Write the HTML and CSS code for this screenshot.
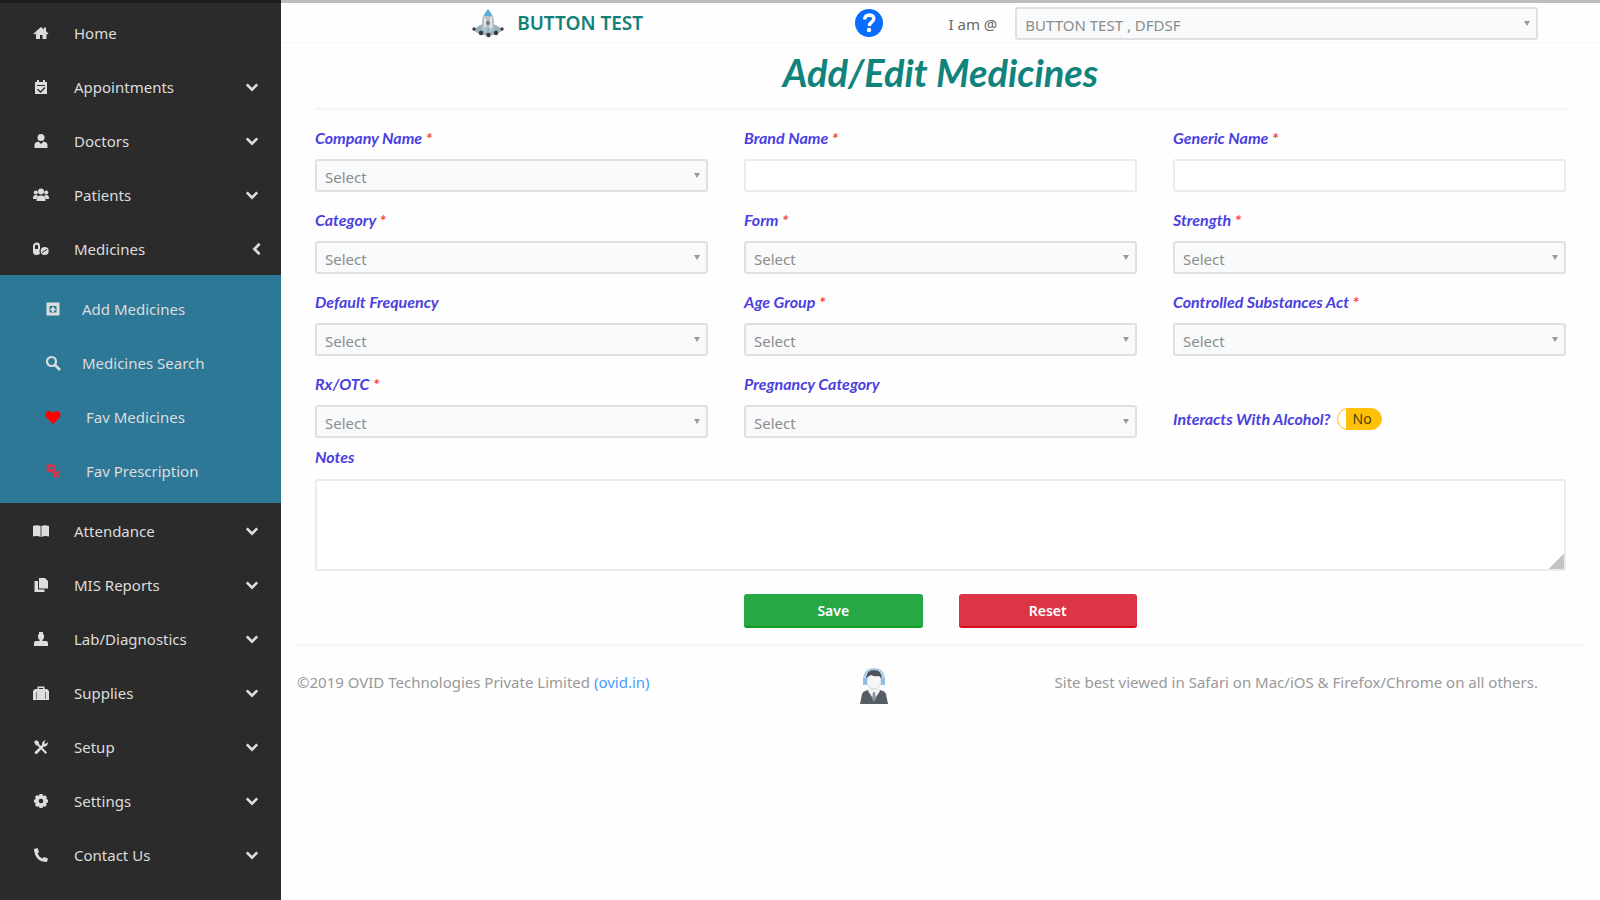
FILE: index.html
```html
<!DOCTYPE html>
<html lang="en">
<head>
  <meta charset="UTF-8">
  <meta name="viewport" content="width=device-width, initial-scale=1.0">
  <title>Add/Edit Medicines</title>
  <link rel="stylesheet" href="styles.css">
</head>
<body>
  <div class="page">
    <nav class="sidebar">
      <a class="nav-item" href="#">
        <svg class="icon" viewBox="0 0 16 16"><path d="M8 2L0.500 8.500l1 1L3 8.500V14h4v-4h2.500v4H13.500V8.500l1 1 1-1L13 6.300V2.500h-2v2z"/></svg>
        <span>Home</span>
      </a>
      <a class="nav-item" href="#">
        <svg class="icon" viewBox="0 0 16 16"><path fill-rule="evenodd" d="M2 3h2V1h2v2h4V1h2v2h2v12H2zM4 6v1h8V6zM11.500 8L7.500 12 5 9.700l-1 1L7.500 14l5-5z"/></svg>
        <span>Appointments</span>
        <svg class="chevron" viewBox="0 0 16 16"><path d="M2 5l6 6 6-6"/></svg>
      </a>
      <a class="nav-item" href="#">
        <svg class="icon" viewBox="0 0 16 16"><circle cx="8" cy="4.500" r="3.500"/><path d="M1.500 15v-3q0-3 4-3.500L8 11l2.500-2.500q4 .5 4 3.500v3z"/></svg>
        <span>Doctors</span>
        <svg class="chevron" viewBox="0 0 16 16"><path d="M2 5l6 6 6-6"/></svg>
      </a>
      <a class="nav-item" href="#">
        <svg class="icon" viewBox="0 0 16 16"><circle cx="8" cy="4.500" r="3"/><circle cx="2.800" cy="5.500" r="2"/><circle cx="13.200" cy="5.500" r="2"/><path d="M0 11q0-3 3-3l2 .5Q3.500 10 3 12H0zM16 11q0-3-3-3l-2 .5q1.500 1.500 2 3.500h3zM3.500 14v-2q0-3.500 4.500-3.500t4.500 3.500v2z"/></svg>
        <span>Patients</span>
        <svg class="chevron" viewBox="0 0 16 16"><path d="M2 5l6 6 6-6"/></svg>
      </a>
      <a class="nav-item nav-item-open" href="#">
        <svg class="icon" viewBox="0 0 16 16"><path fill-rule="evenodd" d="M0 5q0-3 3.500-3.500T7 5v2.500Q6 9 7 12.500 6 14 3.500 14 0 14 0 11zM2 5v3h3V5q0-1.300-1.500-1.300T2 5z"/><circle cx="11.700" cy="10" r="4"/><path d="M9 11.500l5-3" stroke="#2b2b2b"/></svg>
        <span>Medicines</span>
        <svg class="chevron" viewBox="0 0 16 16"><path d="M11 2L5 8l6 6"/></svg>
      </a>
      <div class="submenu">
        <a class="nav-item" href="#">
          <svg class="icon" viewBox="0 0 16 16"><path fill-rule="evenodd" d="M1.500 1.500h13v13h-13zM4.500 5v6.500h7V5zM7 6h2v1.500h1.500v2H9V11H7V9.500H5.500v-2H7z"/></svg>
          <span>Add Medicines</span>
        </a>
        <a class="nav-item" href="#">
          <svg class="icon" viewBox="0 0 16 16"><path d="M9.500 9.500L15 15" stroke="#ddd" stroke-width="2.600"/><circle cx="6.500" cy="6.500" r="4.500" fill="none" stroke="#ddd" stroke-width="2.200"/></svg>
          <span>Medicines Search</span>
        </a>
        <a class="nav-item nav-item-fav" href="#">
          <svg class="icon icon-heart" viewBox="0 0 16 16"><path d="M8 15L1.500 8.500Q-.5 5.500 1.500 3.200 5 .5 8 4q3-3.500 6.500-.8 2 2.300 0 5.300z"/></svg>
          <span>Fav Medicines</span>
        </a>
        <a class="nav-item nav-item-fav" href="#">
          <svg class="icon icon-rx" viewBox="0 0 16 16"><path d="M3 9V2.500h3.500q3 0 3 2.500T7 7.500H3M6.500 7.500L14 14M14 8l-5 6" fill="none" stroke="#dc3545" stroke-width="2.600"/></svg>
          <span>Fav Prescription</span>
        </a>
      </div>
      <a class="nav-item" href="#">
        <svg class="icon" viewBox="0 0 16 16"><path d="M0 3q4-1.500 7.600 0v11Q4 12.500 0 13.500zM16 3q-4-1.500-7.600 0v11q3.600-1.500 7.600-.5z"/></svg>
        <span>Attendance</span>
        <svg class="chevron" viewBox="0 0 16 16"><path d="M2 5l6 6 6-6"/></svg>
      </a>
      <a class="nav-item" href="#">
        <svg class="icon" viewBox="0 0 16 16"><path d="M6 1h6l3 3v7.500H6zM1.500 4H5v8.500h6.500V15h-10z"/></svg>
        <span>MIS Reports</span>
        <svg class="chevron" viewBox="0 0 16 16"><path d="M2 5l6 6 6-6"/></svg>
      </a>
      <a class="nav-item" href="#">
        <svg class="icon" viewBox="0 0 16 16"><path d="M6 1h4v2l1 1v3l-1.500 2v1H14l1 2v3H1v-3l1-2h4.500V9L5 7V4l1-1z"/></svg>
        <span>Lab/Diagnostics</span>
        <svg class="chevron" viewBox="0 0 16 16"><path d="M2 5l6 6 6-6"/></svg>
      </a>
      <a class="nav-item" href="#">
        <svg class="icon" viewBox="0 0 16 16"><path fill-rule="evenodd" d="M4.500 4V1.500h7V4H14l2 2v9H0V6l2-2zM6 3v1h4V3z"/><path d="M3.500 7v7M12.500 7v7" stroke="#777"/></svg>
        <span>Supplies</span>
        <svg class="chevron" viewBox="0 0 16 16"><path d="M2 5l6 6 6-6"/></svg>
      </a>
      <a class="nav-item" href="#">
        <svg class="icon" viewBox="0 0 16 16"><path d="M1 3l2-2 3 2v2l8 8.500L12.500 15 4.500 6.500H3z"/><path d="M9 6q-.5-4 4-5L11 3.500 12.500 5 15 3q0 4.500-4.500 4.800L4 15q-2 .5-2.500-1.800z"/></svg>
        <span>Setup</span>
        <svg class="chevron" viewBox="0 0 16 16"><path d="M2 5l6 6 6-6"/></svg>
      </a>
      <a class="nav-item" href="#">
        <svg class="icon" viewBox="0 0 16 16"><path fill-rule="evenodd" d="M6.500 1h3l.5 2 2-.8 2 2L13.300 6l1.700.7v2.800l-2 .5.800 2-2 2-1.800-.8-.5 1.800h-3L6 13.200l-2 .8-2-2 .8-2-1.800-.5V6.700L2.800 6 2 4l2-2 2 1zM8 5.700a2.300 2.300 0 100 4.600 2.300 2.300 0 000-4.600z"/></svg>
        <span>Settings</span>
        <svg class="chevron" viewBox="0 0 16 16"><path d="M2 5l6 6 6-6"/></svg>
      </a>
      <a class="nav-item" href="#">
        <svg class="icon" viewBox="0 0 16 16"><path d="M1 2l3.500-1L6 5 4.500 6.500q1.500 3.500 5 5L11 10l4 1.500L14 15Q2 15 1 2z"/></svg>
        <span>Contact Us</span>
        <svg class="chevron" viewBox="0 0 16 16"><path d="M2 5l6 6 6-6"/></svg>
      </a>
    </nav>

    <div class="content">
      <header class="topbar">
        <div class="brand">
          <svg class="brand-logo" viewBox="0 0 34 32">
            <path d="M2 23q6-5 10-6h10q4 1 10 6l-6 4-9 2-9-2z" fill="#a3aeb5"/>
            <path d="M11 24V13q1-6 6-10 5 4 6 10v11q-6 3-12 0z" fill="#b7c1c8"/>
            <path d="M13 9q1-4 4-7 3 3 4 7z" fill="#58aedb"/>
            <path d="M14 11v9M20 10v11" stroke="#dfe5e9" stroke-width="2"/>
            <circle cx="17" cy="16" r="2" fill="#777"/>
            <path d="M7 22l6 3M27 22l-6 3M17 21v6" stroke="#84b4cf" stroke-width="2"/>
            <g fill="#3a3a3a"><circle cx="3" cy="22" r="1.700"/><circle cx="10" cy="26" r="2.200"/><circle cx="17.500" cy="28" r="2.200"/><circle cx="25" cy="26" r="2.200"/><circle cx="31" cy="22" r="1.700"/></g>
          </svg>
          <span>BUTTON TEST</span>
        </div>
        <a class="help" href="#" aria-label="Help">
          <svg viewBox="0 0 28 28"><circle cx="14" cy="14" r="14" fill="#0a6cff"/><path d="M9.500 10.500q.5-4.500 5-4.500 4.300.2 4.300 3.800 0 2-2.300 3.500-2 1.200-2.200 3.700" fill="none" stroke="#fff" stroke-width="3.400"/><circle cx="14" cy="21" r="2.200" fill="#fff"/></svg>
        </a>
        <div class="location">
          <label for="location">I am @</label>
          <select id="location" class="select"><option>BUTTON TEST , DFDSF</option></select>
        </div>
      </header>

      <main class="main">
        <h1>Add/Edit Medicines</h1>
        <form class="form">
          <div class="field">
            <label for="company">Company Name <span class="req">*</span></label>
            <select id="company" class="select"><option>Select</option></select>
          </div>
          <div class="field">
            <label for="brand">Brand Name <span class="req">*</span></label>
            <input id="brand" class="input" type="text">
          </div>
          <div class="field">
            <label for="generic">Generic Name <span class="req">*</span></label>
            <input id="generic" class="input" type="text">
          </div>
          <div class="field">
            <label for="category">Category <span class="req">*</span></label>
            <select id="category" class="select"><option>Select</option></select>
          </div>
          <div class="field">
            <label for="form">Form <span class="req">*</span></label>
            <select id="form" class="select"><option>Select</option></select>
          </div>
          <div class="field">
            <label for="strength">Strength <span class="req">*</span></label>
            <select id="strength" class="select"><option>Select</option></select>
          </div>
          <div class="field">
            <label for="frequency">Default Frequency</label>
            <select id="frequency" class="select"><option>Select</option></select>
          </div>
          <div class="field">
            <label for="age">Age Group <span class="req">*</span></label>
            <select id="age" class="select"><option>Select</option></select>
          </div>
          <div class="field">
            <label for="controlled">Controlled Substances Act <span class="req">*</span></label>
            <select id="controlled" class="select"><option>Select</option></select>
          </div>
          <div class="field">
            <label for="rx">Rx/OTC <span class="req">*</span></label>
            <select id="rx" class="select"><option>Select</option></select>
          </div>
          <div class="field">
            <label for="pregnancy">Pregnancy Category</label>
            <select id="pregnancy" class="select"><option>Select</option></select>
          </div>
          <div class="field-inline">
            <label for="alcohol">Interacts With Alcohol?</label>
            <span class="switch">
              <input id="alcohol" type="checkbox">
              <span class="switch-text">No</span>
            </span>
          </div>
          <div class="field field-notes">
            <label for="notes">Notes</label>
            <textarea id="notes" class="input notes"></textarea>
          </div>
          <div class="actions">
            <button type="button" class="btn btn-save">Save</button>
            <button type="reset" class="btn btn-reset">Reset</button>
          </div>
        </form>
      </main>

      <footer class="footer">
        <div>©2019 OVID Technologies Private Limited <a href="#">(ovid.in)</a></div>
        <svg class="agent" viewBox="0 0 28 36">
          <path d="M0 36l2-10q1-3 6-4h12q5 1 6 4l2 10z" fill="#555c63"/>
          <path d="M10 20h8l2 3-6 9-6-9z" fill="#f2f2f2"/>
          <path d="M13 24h2l1 7-2 3-2-3z" fill="#8b949b"/>
          <path d="M4 13Q4 1 14 1t10 12" fill="none" stroke="#a9cdea" stroke-width="2"/>
          <path d="M7 8q1-6 7-6t7 6v7q-2 6-7 6t-7-6z" fill="#f5f5f5" stroke="#cfd6db"/>
          <path d="M6 11Q6 2 14 2t8 9l-3-3q-5 1-8-1-3 1-5 4z" fill="#4b545c"/>
          <path d="M3 10h4v7H3zM21 10h4v7h-4z" fill="#8fbfe8"/>
        </svg>
        <div class="footer-note">Site best viewed in Safari on Mac/iOS &amp; Firefox/Chrome on all others.</div>
      </footer>
    </div>
  </div>
</body>
</html>
```
FILE: styles.css
```css
* {
  box-sizing: border-box;
}

body {
  margin: 0;
  font-family: "Noto Sans", sans-serif;
  font-size: 14px;
  color: #666;
  background-color: #fefefe;
}

.page {
  display: flex;
  min-height: 100vh;
  border-top: 3px solid #bdbdbd;
}

/* sidebar */
.sidebar {
  width: 281px;
  flex-shrink: 0;
  margin-top: -3px;
  padding-top: 2px;
  background-color: #2b2b2b;
  border-top: 3px solid #1c1c1c;
}

.nav-item {
  display: flex;
  align-items: center;
  height: 54px;
  padding: 2px 22px 0 33px;
  color: #ddd;
  font-size: 15px;
  text-decoration: none;
}

.nav-item .icon {
  margin-right: 25px;
}

.icon {
  width: 16px;
  height: 16px;
  fill: #ddd;
}

.chevron {
  width: 14px;
  height: 14px;
  margin-left: auto;
  fill: none;
  stroke: #ddd;
  stroke-width: 3;
}

.nav-item-open {
  padding-right: 17px;
}

.submenu {
  padding: 6px 0;
  background-color: #2d7797;
}

.submenu .nav-item {
  padding-left: 45px;
}

.submenu .icon {
  margin-right: 21px;
}

.submenu .nav-item-fav .icon {
  margin-right: 25px;
}

.submenu .icon-heart {
  fill: #f00;
}

/* header */
.content {
  flex: 1;
  min-width: 0;
}

.topbar {
  display: grid;
  grid-template-columns: 5fr 1fr 6fr;
  align-items: center;
  height: 40px;
  padding: 0 16px;
  border-bottom: 1px solid #f7f7f7;
}

.brand {
  display: flex;
  align-items: center;
  justify-content: center;
  gap: 12px;
  padding-right: 16px;
  color: #128078;
  font-size: 19px;
  font-weight: 600;
}

.brand-logo {
  width: 34px;
  height: 32px;
}

.help {
  padding-left: 22px;
}

.help svg {
  display: block;
  width: 28px;
  height: 28px;
}

.location {
  display: flex;
  align-items: center;
  gap: 18px;
  padding: 2px 46px 0 8px;
  font-size: 15px;
}

.location .select {
  flex: 1;
}

/* form */
.main {
  padding: 0 34px;
}

h1 {
  margin: 0 0 16px;
  padding: 5px 0 12px;
  border-bottom: 2px solid #f5f5f5;
  color: #0f837c;
  font-family: "Lato", sans-serif;
  font-size: 38px;
  font-style: italic;
  line-height: 48px;
  text-align: center;
}

.form {
  display: grid;
  grid-template-columns: repeat(3, 1fr);
  gap: 16px 36px;
}

.field label,
.field-inline label {
  color: #4a40e0;
  font-family: "Lato", sans-serif;
  font-size: 16px;
  font-style: italic;
  font-weight: bold;
  line-height: 24px;
}

.field label {
  display: block;
  margin-bottom: 9px;
}

.req {
  color: #ff3b3b;
}

.select,
.input {
  display: block;
  width: 100%;
  height: 33px;
  border: 2px solid #ebebeb;
  border-radius: 3px;
  background-color: #fff;
  font-family: inherit;
  font-size: 15px;
}

.select {
  appearance: none;
  padding: 2px 8px 0;
  border-color: #dfe0e1;
  color: #8c8c8c;
  background: #f8fafb url("data:image/svg+xml,%3Csvg xmlns='http://www.w3.org/2000/svg' width='6' height='5'%3E%3Cpath d='M0 0h6L3 5z' fill='%23999'/%3E%3C/svg%3E") no-repeat right 6px center;
}

.field-inline {
  display: flex;
  align-items: center;
  gap: 6px;
  padding-top: 28px;
}

.switch {
  display: grid;
  width: 45px;
}

.switch input,
.switch-text {
  grid-area: 1 / 1;
}

.switch input {
  appearance: none;
  width: 100%;
  height: 22px;
  margin: 0;
  border: 1px solid #ffc107;
  border-radius: 11px;
  background: linear-gradient(to right, #fff 8px, #ffc107 8px);
}

.switch-text {
  padding-left: 16px;
  color: #4d3d08;
  line-height: 22px;
  pointer-events: none;
}

.field-notes {
  grid-column: 1 / -1;
  margin-top: -9px;
}

.field-notes label {
  margin-bottom: 10px;
}

.notes {
  height: 92px;
  resize: vertical;
}

.notes::-webkit-resizer {
  background: linear-gradient(135deg, transparent 50%, #c4c4c4 50%);
}

.actions {
  grid-column: 1 / -1;
  display: grid;
  grid-template-columns: repeat(6, 1fr);
  gap: 36px;
  margin: 7px 0 16px;
}

.btn {
  height: 34px;
  border: none;
  border-radius: 3px;
  color: #fff;
  font-family: inherit;
  font-size: 14px;
  font-weight: 600;
}

.btn-save {
  grid-column: 3;
  background-color: #28a745;
  border-bottom: 2px solid #0c9c22;
}

.btn-reset {
  background-color: #dc3545;
  border-bottom: 2px solid #d80d1c;
}

/* footer */
.footer {
  display: grid;
  grid-template-columns: 5fr 1fr 6fr;
  margin: 0 16px;
  padding-top: 22px;
  border-top: 2px solid #f5f5f5;
  color: #999;
  font-size: 15px;
  line-height: 28px;
}

.footer a {
  color: #4a9bff;
  text-decoration: none;
}

.footer-note {
  padding-right: 46px;
  text-align: right;
}

.agent {
  width: 28px;
  height: 36px;
  margin-left: 27px;
}
```
